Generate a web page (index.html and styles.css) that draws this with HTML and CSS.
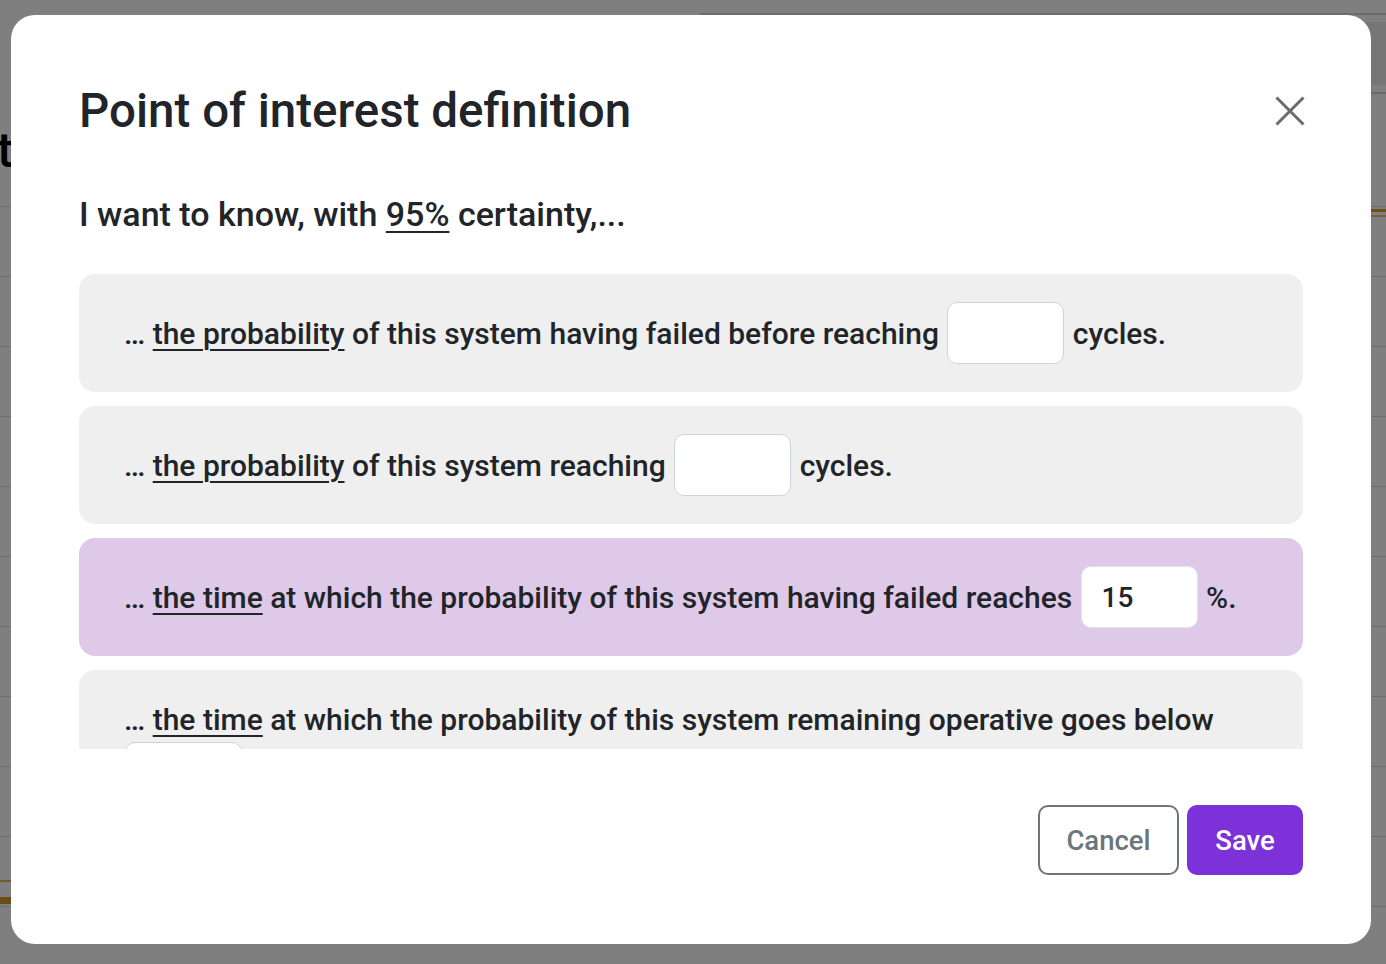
FILE: index.html
```html
<!DOCTYPE html>
<html lang="en">
<head>
<meta charset="utf-8">
<title>Point of interest definition</title>
<link rel="stylesheet" href="styles.css">
</head>
<body>
<div class="page">
  <div class="page-topline"></div>
  <div class="page-topbar"></div>
  <div class="page-subline"></div>
  <div class="page-title">Result</div>
  <div class="page-table">
    <div class="page-row"></div><div class="page-row"></div><div class="page-row"></div>
    <div class="page-row"></div><div class="page-row"></div><div class="page-row"></div>
    <div class="page-row"></div><div class="page-row"></div><div class="page-row"></div>
    <div class="page-row"></div><div class="page-row"></div>
  </div>
  <div class="chart-line cl-right-a"></div>
  <div class="chart-line cl-right-b"></div>
  <div class="chart-line cl-left-a"></div>
  <div class="chart-line cl-left-b"></div>
</div>

<div class="overlay">
  <div class="modal">
    <div class="modal-header">
      <h1 class="modal-title">Point of interest definition</h1>
      <button class="close" type="button" aria-label="Close">
        <svg viewBox="0 0 30 30" width="30" height="30"><path d="M1.5 1.5 L28.5 28.5 M28.5 1.5 L1.5 28.5" stroke="currentColor" stroke-width="3" fill="none"/></svg>
      </button>
    </div>
    <p class="lead">I want to know, with <u class="ul">95%</u> certainty,...</p>
    <div class="options">
      <div class="option">… <u class="ul">the probability</u> of this system having failed before reaching <input class="field" type="text"> cycles.</div>
      <div class="option">… <u class="ul">the probability</u> of this system reaching <input class="field" type="text"> cycles.</div>
      <div class="option selected">… <u class="ul">the time</u> at which the probability of this system having failed reaches <input class="field" type="text" value="15"> %.</div>
      <div class="option">… <u class="ul">the time</u> at which the probability of this system remaining operative goes below <input class="field" type="text"> %.</div>
    </div>
    <div class="footer">
      <button class="btn btn-cancel" type="button">Cancel</button>
      <button class="btn btn-save" type="button">Save</button>
    </div>
  </div>
</div>
</body>
</html>
```

FILE: styles.css
```css
* { box-sizing: border-box; }

html, body {
  margin: 0;
  height: 100%;
}

body {
  background: #ffffff;
  font-family: Roboto, "Liberation Sans", Arial, sans-serif;
  color: #212529;
  overflow: hidden;
}

/* ---- page behind the modal ---- */
.page {
  position: absolute;
  inset: 0;
  background: #ffffff;
}

.page-topline {
  position: absolute;
  top: 13px;
  left: 700px;
  right: 0;
  height: 2px;
  background: #d6d6d6;
}

.page-topbar {
  position: absolute;
  top: 22px;
  left: 700px;
  right: 0;
  height: 63px;
  background: #ececec;
}

.page-subline {
  position: absolute;
  top: 92px;
  left: 700px;
  right: 0;
  height: 2px;
  background: #d2d2d2;
}

.page-title {
  position: absolute;
  top: 122px;
  right: 1373px;
  font-size: 48px;
  font-weight: 500;
  color: #000;
}

.page-table {
  position: absolute;
  top: 137px;
  left: 0;
  right: 0;
}

.page-row {
  height: 70px;
  border-bottom: 1px solid #dcdcdc;
}

.chart-line {
  position: absolute;
  height: 3px;
  background: #d9a032;
}
.cl-right-a { top: 209px; left: 1360px; width: 26px; }
.cl-right-b { top: 215px; left: 1360px; width: 26px; height: 2px; background: #e6c27a; }
.cl-left-a { top: 880px; left: 0; width: 12px; height: 2px; background: #e2b358; }
.cl-left-b { top: 897px; left: 0; width: 12px; height: 7px; background: #d39b2c; }

/* ---- overlay + modal ---- */
.overlay {
  position: fixed;
  inset: 0;
  background: rgba(0, 0, 0, 0.5);
  padding: 15px 15px 20px 11px;
  display: flex;
}

.modal {
  flex: 1;
  min-height: 0;
  background: #ffffff;
  border-radius: 24px;
  padding: 67px 68px 69px 68px;
  display: flex;
  flex-direction: column;
}

.modal-header {
  display: flex;
  align-items: center;
  justify-content: space-between;
}

.modal-title {
  margin: 0;
  font-size: 47.5px;
  line-height: 58px;
  font-weight: 500;
  color: #212529;
}

.close {
  border: 0;
  background: none;
  padding: 0;
  margin-right: -2px;
  width: 30px;
  height: 30px;
  color: #6b6b6b;
  display: flex;
}

.lead {
  margin: 54px 0 0 0;
  font-size: 34px;
  line-height: 41px;
  font-weight: 500;
  color: #212529;
}

.ul {
  text-decoration: underline;
  text-decoration-thickness: 2px;
  text-underline-offset: 5px;
}

.options {
  flex: 1;
  min-height: 0;
  overflow: hidden;
  margin-top: 39px;
  display: flex;
  flex-direction: column;
  gap: 14px;
}

.option {
  flex: none;
  background: #efefef;
  border-radius: 16px;
  padding: 28px 45px 22px 45px;
  font-size: 30px;
  line-height: 44px;
  font-weight: 500;
  color: #212529;
}

.option.selected {
  background: #dfc9e8;
}

.field {
  display: inline-block;
  vertical-align: middle;
  width: 117px;
  height: 62px;
  margin: 0 1px 6px 1px;
  padding: 0 20px;
  border: 1.5px solid #ced4da;
  border-radius: 10px;
  background: #ffffff;
  font-family: inherit;
  font-size: 28px;
  font-weight: 500;
  color: #212529;
  outline: none;
}

.option.selected .field {
  border-color: #e4e4e4;
}

.footer {
  margin-top: 56px;
  display: flex;
  justify-content: flex-end;
  gap: 8px;
}

.btn {
  height: 70px;
  border-radius: 10px;
  font-family: inherit;
  font-size: 27.5px;
  font-weight: 500;
  padding: 0;
  cursor: pointer;
}

.btn-cancel {
  width: 141px;
  background: #ffffff;
  border: 2px solid #6c757d;
  color: #6c757d;
}

.btn-save {
  width: 116px;
  background: #7c31d9;
  border: 2px solid #7c31d9;
  color: #ffffff;
}
```
